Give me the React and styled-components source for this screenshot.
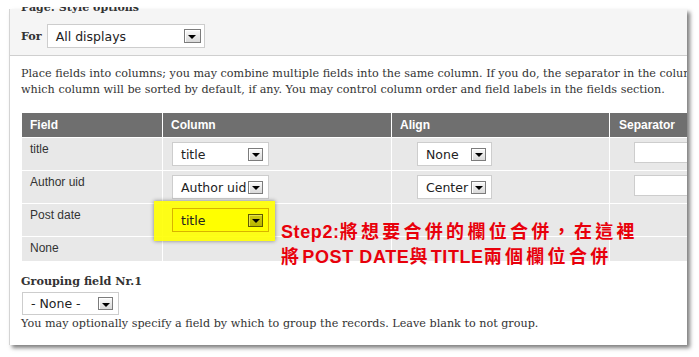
import React from "react";
import styled, { createGlobalStyle } from "styled-components";

const GlobalStyle = createGlobalStyle`
  html, body {
    margin: 0;
    padding: 0;
    background: #fff;
  }
`;

const serif = `"DejaVu Serif", Georgia, serif`;

const Page = styled.div`
  width: 699px;
  height: 357px;
  overflow: hidden;
  font-family: ${serif};
  color: #333;
`;

// the page was scrolled: only the foot of the fieldset legend shows
const Legend = styled.div`
  position: relative;
  z-index: 1;
  box-sizing: border-box;
  height: 9px;
  padding: 3px 0 0 21px;
  font: bold 11px/9px ${serif};
  color: #333;
  white-space: nowrap;
  clip-path: inset(7px -10px -10px -10px);
`;

const Panel = styled.section`
  width: 677px;
  margin-left: 9px;
  padding-bottom: 13px;
  border-left: 1px solid #d4d4d4;
  background: #fff;
  box-shadow: 3px 3px 4px rgba(0, 0, 0, 0.5);
  overflow: hidden;
`;

const ForBar = styled.div`
  display: flex;
  align-items: center;
  gap: 5px;
  padding: 15px 0 7px 11px;
  background: #f5f5f5;
  border-bottom: 1px solid #cfcfcf;
`;

const Label = styled.span`
  font: bold 11.2px/16px ${serif};
  color: #333;
`;

const Intro = styled.p`
  margin: 10px 0 0;
  padding-left: 11px;
  font-size: 11.2px;
  line-height: 16px;
  white-space: nowrap;
`;

const TableWrap = styled.div`
  position: relative;
  width: max-content;
  margin: 15px 0 0 12px;
`;

const Table = styled.table`
  width: 708px;
  border-collapse: separate;
  border-spacing: 0;
  table-layout: fixed;
  font: 12px/14px "Liberation Sans", Arial, sans-serif;
  color: #333;
`;

const Th = styled.th`
  box-sizing: border-box;
  width: ${(p) => p.$w}px;
  padding: 0 8px 0 ${(p) => p.$pl || 8}px;
  background: #6f6f6f;
  color: #fff;
  font-weight: bold;
  line-height: 24px;
  text-align: left;
  border-right: 1px solid #fff;
  border-bottom: 1px solid #fff;
  white-space: nowrap;
`;

const Row = styled.tr`
  & > td {
    padding-bottom: ${(p) => p.$pb ?? 4}px;
  }
`;

const Td = styled.td`
  padding: 4px 8px 4px ${(p) => p.$pl || 8}px;
  vertical-align: top;
  background: #e8e8e8;
  border-right: 1px solid #fff;
  border-bottom: 1px solid #fff;
  white-space: nowrap;
`;

const Select = styled.div`
  box-sizing: border-box;
  display: flex;
  align-items: center;
  justify-content: space-between;
  width: ${(p) => p.$w}px;
  height: ${(p) => p.$h || 24}px;
  padding: 0 ${(p) => p.$pr || 5}px 0 8px;
  border: 1px solid ${(p) => (p.$hl ? "#d8b400" : "#cdcdcd")};
  background: ${(p) => (p.$hl ? "#ffff00" : "#fff")};
  font: 12.5px "DejaVu Sans", Verdana, sans-serif;
  color: #222;
  white-space: nowrap;
`;

const Arrow = styled.span`
  position: relative;
  box-sizing: border-box;
  flex: none;
  width: ${(p) => p.$w || 15}px;
  height: ${(p) => p.$h || 13}px;
  border: 1px solid ${(p) => (p.$hl ? "#5e5a00" : "#7c7c7c")};
  box-shadow: inset 1px 1px 0 ${(p) => (p.$hl ? "#e6e24a" : "#fff")};
  background: ${(p) =>
    p.$hl
      ? "linear-gradient(#cfcb10, #b8b400)"
      : "linear-gradient(#fafafa, #d9d9d9)"};

  &::after {
    content: "";
    position: absolute;
    left: 50%;
    top: 50%;
    margin: -1px 0 0 -4px;
    border-left: 4px solid transparent;
    border-right: 4px solid transparent;
    border-top: 4px solid #000;
  }
`;

const Input = styled.div`
  box-sizing: border-box;
  width: 90px;
  height: 21px;
  border: 1px solid #cdcdcd;
  background: #fff;
`;

const Highlight = styled.div`
  position: relative;
  z-index: 1;
  width: fit-content;
  margin: -7px -6px -9px -18px;
  padding: 7px 6px 9px 18px;
  background: rgba(255, 255, 0, 0.9);
  box-shadow: 0 0 4px rgba(0, 0, 0, 0.45);
`;

const Note = styled.div`
  position: absolute;
  z-index: 2;
  left: 259px;
  top: 106px;
  font: bold 18px/23px "Liberation Sans", "Noto Sans CJK TC", sans-serif;
  letter-spacing: 0.6px;
  color: #e8000b;
  white-space: nowrap;
`;

const Han = styled.span`
  font-family: "Noto Sans CJK TC", sans-serif;
  letter-spacing: 3.3px;
`;

const GroupTitle = styled.div`
  margin-top: 11px;
  padding-left: 11px;
  font: bold 11.2px/16px ${serif};
  color: #333;
`;

const GroupSelect = styled.div`
  margin: 3px 0 0 12px;
`;

const Help = styled.div`
  margin-top: 1px;
  padding-left: 11px;
  font-size: 11.2px;
  line-height: 16px;
  white-space: nowrap;
`;

function Dropdown({ value, w, h, hl, pr, aw, ah }) {
  return (
    <Select $w={w} $h={h} $hl={hl} $pr={pr}>
      <span>{value}</span>
      <Arrow $hl={hl} $w={aw} $h={ah} />
    </Select>
  );
}

export default function App() {
  return (
    <Page>
      <GlobalStyle />
      <Legend>Page: Style options</Legend>
      <Panel>
        <ForBar>
          <Label>For</Label>
          <Dropdown value="All displays" w={158} pr={3} aw={17} ah={14} />
        </ForBar>
        <Intro>
          Place fields into columns; you may combine multiple fields into the
          same column. If you do, the separator in the column
          <br />
          which column will be sorted by default, if any. You may control column
          order and field labels in the fields section.
        </Intro>

        <TableWrap>
          <Table>
            <thead>
              <tr>
                <Th $w={141}>Field</Th>
                <Th $w={229}>Column</Th>
                <Th $w={218}>Align</Th>
                <Th $w={120} $pl={9}>Separator</Th>
              </tr>
            </thead>
            <tbody>
              <Row>
                <Td>title</Td>
                <Td $pl={9}>
                  <Dropdown value="title" w={97} />
                </Td>
                <Td $pl={25}>
                  <Dropdown value="None" w={75} />
                </Td>
                <Td $pl={24}>
                  <Input />
                </Td>
              </Row>
              <Row>
                <Td>Author uid</Td>
                <Td $pl={9}>
                  <Dropdown value="Author uid" w={97} />
                </Td>
                <Td $pl={25}>
                  <Dropdown value="Center" w={75} />
                </Td>
                <Td $pl={24}>
                  <Input />
                </Td>
              </Row>
              <Row>
                <Td>Post date</Td>
                <Td $pl={9}>
                  <Highlight>
                    <Dropdown value="title" w={97} hl />
                  </Highlight>
                </Td>
                <Td />
                <Td />
              </Row>
              <Row $pb={6}>
                <Td>None</Td>
                <Td />
                <Td />
                <Td />
              </Row>
            </tbody>
          </Table>
          <Note>
            Step2:<Han>將想要合併的欄位合併，在這裡</Han>
            <br />
            <Han>將</Han>POST DATE<Han>與</Han>TITLE<Han>兩個欄位合併</Han>
          </Note>
        </TableWrap>

        <GroupTitle>Grouping field Nr.1</GroupTitle>
        <GroupSelect>
          <Dropdown value="- None -" w={97} h={23} />
        </GroupSelect>
        <Help>
          You may optionally specify a field by which to group the records.
          Leave blank to not group.
        </Help>
      </Panel>
    </Page>
  );
}
